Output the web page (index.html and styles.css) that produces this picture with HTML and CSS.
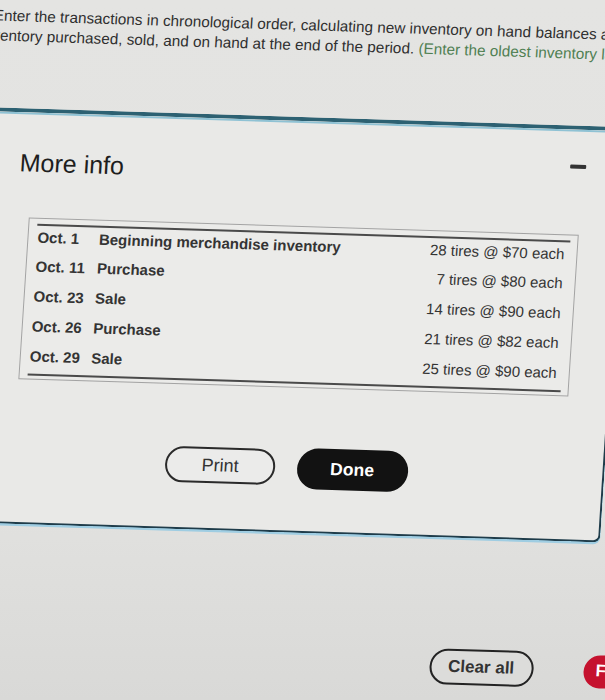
FILE: index.html
```html
<!DOCTYPE html>
<html lang="en">
<head>
<meta charset="utf-8">
<title>More info</title>
<link rel="stylesheet" href="styles.css">
</head>
<body>
<div class="page">
  <div class="prompt">
    <div class="line l1">Enter the transactions in chronological order, calculating new inventory on hand balances and the total cost of</div>
    <div class="line l2">inventory purchased, sold, and on hand at the end of the period. <span class="hint">(Enter the oldest inventory layers first.)</span></div>
  </div>

  <div class="modal">
    <div class="modal-head">
      <h2 class="title">More info</h2>
      <span class="minimize" aria-label="Minimize"></span>
    </div>

    <div class="info-box">
      <div class="rule"></div>
      <div class="rows">
        <div class="row"><span class="date">Oct. 1</span><span class="desc">Beginning merchandise inventory</span><span class="amt">28 tires @ $70 each</span></div>
        <div class="row"><span class="date">Oct. 11</span><span class="desc">Purchase</span><span class="amt">7 tires @ $80 each</span></div>
        <div class="row"><span class="date">Oct. 23</span><span class="desc">Sale</span><span class="amt">14 tires @ $90 each</span></div>
        <div class="row"><span class="date">Oct. 26</span><span class="desc">Purchase</span><span class="amt">21 tires @ $82 each</span></div>
        <div class="row"><span class="date">Oct. 29</span><span class="desc">Sale</span><span class="amt">25 tires @ $90 each</span></div>
      </div>
      <div class="rule"></div>
    </div>

    <div class="buttons">
      <button class="btn print">Print</button>
      <button class="btn done">Done</button>
    </div>
  </div>

  <div class="actions">
    <button class="btn clear">Clear all</button>
    <button class="btn check">F</button>
  </div>
</div>
</body>
</html>
```

FILE: styles.css
```css
html, body {
  margin: 0;
  padding: 0;
  width: 605px;
  height: 700px;
  overflow: hidden;
  background: linear-gradient(#e4e4e2, #e2e2e0 70%, #d9d9d7);
}

.page {
  width: 605px;
  height: 700px;
  font-family: "Liberation Sans", Arial, sans-serif;
  color: #2e2e2e;
  transform-origin: 300px 300px;
  transform: skewY(1.8deg) skewX(-3.7deg);
}

/* prompt text */
.prompt {
  padding-top: 15px;
  font-size: 15.3px;
  line-height: 20px;
  color: #2f2f2f;
}
.line {
  white-space: nowrap;
}
.l1 { margin-left: -24px; }
.l2 { margin-left: -36px; }
.hint { color: #4f7f52; }

/* modal (its left edge runs past the frame) */
.modal {
  box-sizing: border-box;
  margin: 62px 0 0 -40px;
  width: 655px;
  height: 416px;
  background: #e9e9e7;
  border-top: 4px solid #2d6172;
  border-right: 2px solid #1f3c4a;
  border-bottom: 2px solid #1f3c4a;
  border-bottom-right-radius: 7px;
  box-shadow: inset 0 2px 0 #8fc2d4, 0 2px 0 #9fcde2;
}

.modal-head {
  display: flex;
  align-items: flex-start;
  padding: 36px 36px 0 51.5px;
  height: 28px;
}
.title {
  margin: 0;
  font-size: 25px;
  font-weight: normal;
  line-height: 28px;
  color: #1e1e1e;
}
.minimize {
  margin-left: auto;
  margin-top: -1.5px;
  width: 16px;
  height: 4px;
  border-radius: 1px;
  background: #333;
}

/* info table */
.info-box {
  box-sizing: border-box;
  margin: 40.5px 0 0 63.5px;
  width: 550.5px;
  border: 1px solid #a3a3a3;
  background: #ebebe9;
  padding: 5.5px 7px 3.5px 8.5px;
}
.rule {
  height: 2px;
  background: #4a4a4a;
}
.rows {
  display: flex;
  flex-direction: column;
  gap: 9.7px;
  padding: 1.8px 5px 7.4px 1px;
}
.row {
  display: grid;
  grid-template-columns: 61.5px 1fr auto;
  font-size: 15px;
  line-height: 20px;
  color: #343434;
}
.date, .desc { font-weight: bold; }
.amt { text-align: right; }

/* buttons */
.btn {
  box-sizing: border-box;
  flex: none;
  font-family: "Liberation Sans", Arial, sans-serif;
  white-space: nowrap;
  border-radius: 999px;
  padding: 0;
  cursor: pointer;
}
.buttons {
  display: flex;
  align-items: center;
  gap: 21.5px;
  margin: 59.5px 0 0 216px;
}
.print {
  width: 110px;
  height: 36px;
  border: 2px solid #2a2a2a;
  background: #ebebea;
  color: #333;
  font-size: 18px;
}
.done {
  width: 111px;
  height: 41px;
  border: none;
  background: #121212;
  color: #fff;
  font-size: 17.5px;
  font-weight: bold;
}

.actions {
  display: flex;
  align-items: center;
  gap: 50.5px;
  width: 400px;
  margin: 111px 0 0 452.5px;
}
.clear {
  width: 104px;
  height: 36px;
  border: 2px solid #232323;
  background: #dcdcda;
  color: #333;
  font-size: 17px;
  font-weight: bold;
}
.check {
  width: 110px;
  height: 33px;
  border: none;
  background: #c5122e;
  color: #fff;
  font-size: 17px;
  font-weight: bold;
  text-align: left;
  padding-left: 12px;
}
```
